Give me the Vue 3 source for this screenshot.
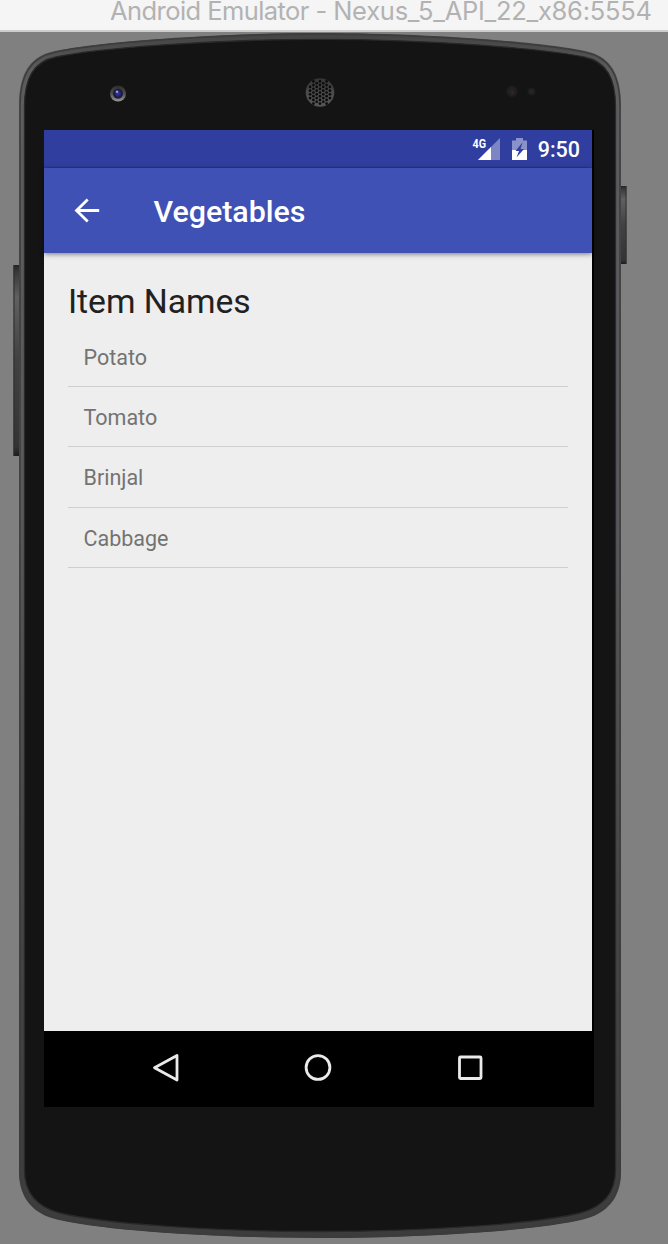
<script setup>
const items = ['Potato', 'Tomato', 'Brinjal', 'Cabbage']

// Perforations of the earpiece: staggered columns clipped to the disc
const holes = []
for (let col = -4; col <= 4; col++) {
  for (let row = -4; row <= 4; row++) {
    const dx = col * 3.3
    const dy = (row + (col % 2 ? 0.5 : 0)) * 3.7
    if (Math.hypot(dx, dy) < 13) holes.push({ x: 320 + dx, y: 92.5 + dy })
  }
}
</script>

<template>
  <div class="window">
    <header class="titlebar"><span class="window-title"><span class="app-name">Android Emulator - </span>Nexus_5_API_22_x86:5554</span></header>
    <main class="stage">
      <svg class="device" width="668" height="1212" viewBox="0 32 668 1212" aria-hidden="true">
        <defs>
          <linearGradient id="rim" x1="0" y1="33" x2="0" y2="1238" gradientUnits="userSpaceOnUse">
            <stop offset="0" stop-color="#424242" />
            <stop offset="0.03" stop-color="#5c5c5d" />
            <stop offset="0.07" stop-color="#5c5c60" />
            <stop offset="0.4" stop-color="#59595d" />
            <stop offset="0.75" stop-color="#444" />
            <stop offset="1" stop-color="#3c3c3c" />
          </linearGradient>
          <linearGradient id="key" x1="0" y1="0" x2="0" y2="1">
            <stop offset="0" stop-color="#252525" />
            <stop offset="0.04" stop-color="#3a3a3a" />
            <stop offset="0.17" stop-color="#606060" />
            <stop offset="0.5" stop-color="#414141" />
            <stop offset="0.95" stop-color="#343434" />
            <stop offset="1" stop-color="#1c1c1c" />
          </linearGradient>
          <linearGradient id="lens-ring" x1="0" y1="0" x2="0" y2="1">
            <stop offset="0" stop-color="#2c2c2c" />
            <stop offset="0.5" stop-color="#505050" />
            <stop offset="1" stop-color="#989898" />
          </linearGradient>
          <radialGradient id="lens">
            <stop offset="0" stop-color="#3838b0" />
            <stop offset="0.5" stop-color="#22227c" />
            <stop offset="0.8" stop-color="#1b1b30" />
            <stop offset="1" stop-color="#333" />
          </radialGradient>
          <linearGradient id="mesh" x1="0" y1="0" x2="0" y2="1">
            <stop offset="0" stop-color="#333" />
            <stop offset="0.5" stop-color="#4a4a4a" />
            <stop offset="1" stop-color="#565656" />
          </linearGradient>
          <radialGradient id="sensor">
            <stop offset="0" stop-color="#292626" />
            <stop offset="0.7" stop-color="#1f1e1e" />
            <stop offset="1" stop-color="#141414" />
          </radialGradient>
        </defs>
        <rect x="13.5" y="265" width="7" height="191" fill="url(#key)" />
        <path d="M14 265V456" stroke="#2c2c2c" />
        <rect x="619" y="186" width="7.5" height="78" fill="url(#key)" />
        <path d="M626 186V264" stroke="#333" />
        <path
          d="M19 105C19 78 27 57 53 51.500C90 43 205 33 320 33S550 43 587 51.500C613 57 621 78 621 105V1172C621 1199 606 1214 583 1219.500C540 1230 430 1238 320 1238S100 1230 57 1219.500C34 1214 19 1199 19 1172Z"
          fill="url(#rim)"
        />
        <path
          d="M20 105C20 79 28 58 54 52.500C91 44 206 34 320 34S549 44 586 52.500C612 58 620 79 620 105V1172C620 1198 605 1213 582 1218.500C539 1229 430 1237 320 1237S101 1229 58 1218.500C35 1213 20 1198 20 1172Z"
          fill="none" stroke="#3c3c3c" stroke-width="1.500"
        />
        <path
          d="M24.500 107C24.500 79 33 61.500 56 57C93 49 207 39.300 320 39.300S547 49 584 57C607 61.500 615.500 79 615.500 107V1170C615.500 1193 603 1207 580 1213C537 1223.500 430 1231.500 320 1231.500S103 1223.500 60 1213C37 1207 24.500 1193 24.500 1170Z"
          fill="#141414" stroke="#292929" stroke-width="1.300"
        />
        <circle cx="118" cy="93.500" r="8" fill="url(#lens-ring)" />
        <circle cx="118" cy="93.500" r="5.200" fill="url(#lens)" />
        <circle cx="117" cy="91.800" r="1.300" fill="#9a9ac8" />
        <circle cx="320" cy="92.500" r="14.300" fill="url(#mesh)" />
        <circle v-for="(h, i) in holes" :key="i" :cx="h.x" :cy="h.y" r="1.350" fill="#0b0b0b" />
        <circle cx="512" cy="91.500" r="6.500" fill="url(#sensor)" />
        <circle cx="512.500" cy="93" r="0.800" fill="#4a2a22" />
        <circle cx="531.500" cy="91.500" r="4.500" fill="url(#sensor)" />
      </svg>

      <section class="bezel">
        <div class="screen">
          <div class="statusbar">
            <svg class="signal" width="28" height="24" viewBox="472 137 28 24">
              <path d="M500 138V160H478Z" fill="#7c86c5" />
              <path d="M491 147V160H478Z" fill="#fff" />
              <text x="472.500" y="148" textLength="13.500" lengthAdjust="spacingAndGlyphs" class="network">4G</text>
            </svg>
            <svg class="battery" width="16" height="24" viewBox="511 137 16 24">
              <path d="M512 140.500h4V138h7v2.500h4V160h-15Z" fill="#8992cb" />
              <path d="M512 150h15v10h-15Z" fill="#fff" />
              <path d="M522.500 142.500L515.500 151h3.500L516.500 157.500l7.500-8.500h-3.500Z" fill="#303f9f" />
            </svg>
            <span class="clock">9:50</span>
          </div>
          <div class="appbar">
            <svg class="back" width="26" height="26" viewBox="0 0 26 26">
              <path d="M25.200 12.500H3M13.700 1.500L2.500 12.500l11.200 11" fill="none" stroke="#fff" stroke-width="2.800" />
            </svg>
            <span class="title">Vegetables</span>
          </div>
          <div class="content">
            <h1 class="heading"><span>Item Names</span></h1>
            <ul class="list">
              <li v-for="item in items" :key="item" class="row">{{ item }}</li>
            </ul>
          </div>
        </div>
        <nav class="navbar">
          <svg width="30" height="30" viewBox="0 0 30 30">
            <path d="M26 2.500V27L3.500 14.700Z" />
          </svg>
          <svg width="30" height="30" viewBox="0 0 30 30">
            <circle cx="15" cy="14.500" r="11.900" />
          </svg>
          <svg width="30" height="30" viewBox="0 0 30 30">
            <rect x="4.500" y="4" width="21.500" height="21.500" rx="1" />
          </svg>
        </nav>
      </section>
    </main>
  </div>
</template>

<style>
html, body { margin: 0; background: #808080; }
</style>

<style scoped>
.window {
  width: 668px;
  height: 1244px;
  overflow: hidden;
  background: #808080;
  font-family: Roboto, "Liberation Sans", sans-serif;
}
.titlebar {
  box-sizing: border-box;
  height: 32px;
  background: #f5f5f5;
  border-bottom: 2px solid #cdcdcd;
}
.window-title {
  display: block;
  padding-left: 110px;
  font-family: Inter, "Liberation Sans", sans-serif;
  font-size: 25.5px;
  line-height: 22px;
  letter-spacing: -0.26px;
  white-space: nowrap;
  color: #b2b2b2;
}
.app-name { letter-spacing: -0.57px; }
.stage {
  position: relative;
  height: 1212px;
}
.device {
  position: absolute;
  inset: 0;
}
.bezel {
  position: relative;
  display: flex;
  flex-direction: column;
  width: 550px;
  height: 977px;
  margin-left: 44px;
  top: 98px;
  background: #000;
}
.screen {
  display: flex;
  flex-direction: column;
  width: 548px;
  height: 901px;
  background: #eee;
}
.statusbar {
  display: flex;
  align-items: center;
  justify-content: flex-end;
  box-sizing: border-box;
  height: 38px;
  padding-right: 12px;
  background: #303f9f;
  border-bottom: 1px solid #2c3990;
  color: #fff;
}
.battery { margin-left: 11px; }
.network {
  font-family: Roboto, sans-serif;
  font-size: 13.5px;
  font-weight: 700;
  fill: #fff;
}
.clock {
  margin-left: 11px;
  font-size: 21.5px;
  font-weight: 500;
  line-height: 38px;
  padding-top: 3px;
}
.appbar {
  display: flex;
  align-items: center;
  height: 85px;
  background: #3f51b5;
  box-shadow: 0 1px 5px rgba(0, 0, 0, 0.5);
  color: #fff;
}
.back { margin-left: 30px; }
.title {
  margin-left: 53.5px;
  padding-top: 2px;
  font-size: 30.4px;
  font-weight: 500;
}
.content {
  flex: 1;
  padding: 24px 24px 0;
}
.heading {
  margin: 0;
  height: 49.8px;
  font-size: 33.7px;
  line-height: 49px;
  font-weight: 400;
  letter-spacing: -0.05px;
  color: #212121;
}
.list {
  margin: 0;
  padding: 0;
  list-style: none;
}
.row {
  box-sizing: border-box;
  height: 60.35px;
  padding-left: 15.5px;
  border-bottom: 1px solid #cecece;
  font-size: 21.5px;
  line-height: 62px;
  color: #737373;
}
.navbar {
  display: flex;
  align-items: center;
  gap: 122px;
  height: 74px;
  padding-left: 107px;
}
.navbar svg {
  fill: none;
  stroke: #eaeaea;
  stroke-width: 2.8;
  stroke-linejoin: round;
}
</style>
